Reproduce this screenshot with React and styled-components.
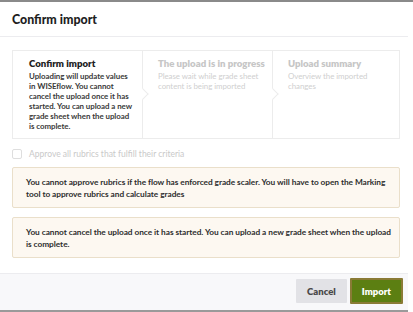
import React from "react";
import styled, { createGlobalStyle } from "styled-components";

const Global = createGlobalStyle`
  html, body { margin: 0; padding: 0; background: #ffffff; }
  body { font-family: Lato, "Noto Sans", sans-serif; color: #333; }
  * { box-sizing: border-box; }
`;

const Frame = styled.div`
  width: 413px;
  height: 312px;
  border-top: 2px solid #8a8a8a;
  display: flex;
  flex-direction: column;
  overflow: hidden;
`;

const Dialog = styled.div`
  width: 408px;
  flex: 1;
  display: flex;
  flex-direction: column;
  background: #fff;
  border-bottom: 2px solid #9a9a9a;
`;

const Header = styled.header`
  height: 35px;
  padding: 0 12px;
  display: flex;
  align-items: center;
  border-bottom: 1px solid #ececef;
`;

const Title = styled.h1`
  margin: 0;
  font-size: 12.4px;
  font-weight: 900;
  color: #1e1e1e;
`;

const Body = styled.div`
  flex: 1;
  padding: 13px 8px 0 12px;
  display: flex;
  flex-direction: column;
`;

const Steps = styled.div`
  height: 89px;
  border: 1px solid #ececec;
  display: grid;
  grid-template-columns: 129px 130px 1fr;
`;

const Step = styled.div`
  position: relative;
  padding: 7px 6.5px 0 ${(p) => p.$pad}px;
  border-left: ${(p) => (p.$first ? "none" : "1px solid #ececec")};
  color: ${(p) => (p.$active ? "#333" : "#cbcbcb")};
`;

const Chevron = styled.span`
  position: absolute;
  left: -4px;
  top: 39px;
  width: 8px;
  height: 8px;
  background: #fff;
  border-top: 1px solid #ececec;
  border-right: 1px solid #ececec;
  transform: rotate(45deg);
`;

const StepTitle = styled.div`
  font-size: 9.6px;
  font-weight: 800;
  line-height: 12px;
  white-space: nowrap;
  color: ${(p) => (p.$active ? "#222" : "#c6c6c6")};
`;

const StepText = styled.div`
  margin-top: 1px;
  font-size: 7.9px;
  line-height: 10px;
  letter-spacing: -0.05px;
  font-weight: ${(p) => (p.$active ? 700 : 400)};
  color: ${(p) => (p.$active ? "#3a3a3a" : "#cfcfcf")};
`;

const CheckRow = styled.label`
  margin-top: 9px;
  height: 12px;
  display: flex;
  align-items: center;
  gap: 7px;
  font-size: 8.5px;
  color: #c9c9c9;
`;

const Box = styled.span`
  width: 10px;
  height: 10px;
  border: 1px solid #dedede;
  border-radius: 2px;
  background: #fff;
`;

const Notice = styled.div`
  margin-top: ${(p) => p.$mt}px;
  height: 41px;
  padding: 9px 4px 0 13px;
  background: #fdf8f1;
  border: 1px solid #eadfca;
  border-radius: 2px;
  font-size: 8.3px;
  line-height: 11.5px;
  letter-spacing: -0.05px;
  color: #2e2e2e;
  font-weight: 700;
`;

const Footer = styled.footer`
  height: 37px;
  margin-top: 13px;
  background: #f8f8fa;
  border-top: 1px solid #ececef;
  display: flex;
  justify-content: flex-end;
  align-items: center;
  padding: 0 5px 2px 0;
  gap: 3px;
`;

const Button = styled.button`
  height: ${(p) => (p.$primary ? 26 : 24)}px;
  padding: 0 ${(p) => (p.$primary ? 10 : 11)}px;
  font-family: Lato, "Noto Sans", sans-serif;
  font-size: 9.5px;
  font-weight: 800;
  border-radius: 1px;
  border: ${(p) => (p.$primary ? "2px solid #8a7b36" : "none")};
  background: ${(p) => (p.$primary ? "#5c7f12" : "#e2e2e6")};
  color: ${(p) => (p.$primary ? "#fff" : "#4a4a4a")};
`;

export default function App() {
  return (
    <>
      <Global />
      <Frame>
        <Dialog>
          <Header>
            <Title>Confirm import</Title>
          </Header>
          <Body>
            <Steps>
              <Step $first $active $pad={16}>
                <StepTitle $active>Confirm import</StepTitle>
                <StepText $active>
                  Uploading will update values in WISEflow. You cannot cancel the upload once it has started. You can upload a new grade sheet when the upload is complete.
                </StepText>
              </Step>
              <Step $pad={15}>
                <Chevron />
                <StepTitle>The upload is in progress</StepTitle>
                <StepText>Please wait while grade sheet content is being imported</StepText>
              </Step>
              <Step $pad={15}>
                <Chevron />
                <StepTitle>Upload summary</StepTitle>
                <StepText>Overview the imported changes</StepText>
              </Step>
            </Steps>
            <CheckRow>
              <Box />
              Approve all rubrics that fulfill their criteria
            </CheckRow>
            <Notice $mt={7}>
              You cannot approve rubrics if the flow has enforced grade scaler. You will have to open the Marking tool to approve rubrics and calculate grades
            </Notice>
            <Notice $mt={9}>
              You cannot cancel the upload once it has started. You can upload a new grade sheet when the upload is complete.
            </Notice>
          </Body>
          <Footer>
            <Button>Cancel</Button>
            <Button $primary>Import</Button>
          </Footer>
        </Dialog>
      </Frame>
    </>
  );
}
